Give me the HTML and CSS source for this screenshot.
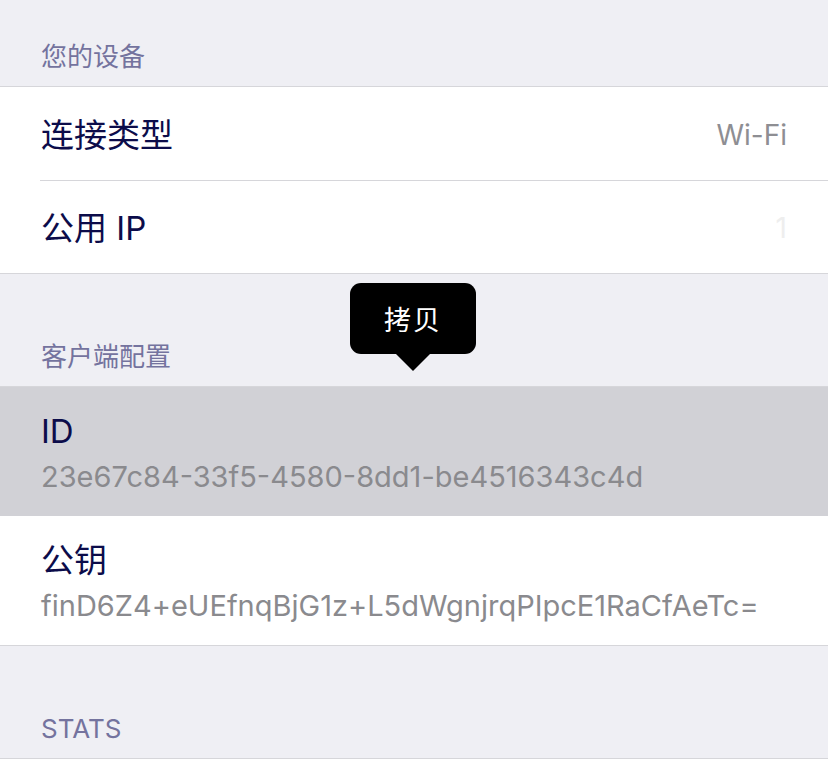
FILE: index.html
```html
<!DOCTYPE html>
<html lang="zh-CN">
<head>
<meta charset="utf-8">
<link rel="stylesheet" href="styles.css">
</head>
<body>
<div class="page">
  <div class="section-header first">您的设备</div>
  <div class="group">
    <div class="row">
      <span class="title">连接类型</span>
      <span class="value">Wi-Fi</span>
    </div>
    <div class="row">
      <span class="title">公用 IP</span>
      <span class="value faint">1</span>
    </div>
  </div>

  <div class="section-header">客户端配置</div>
  <div class="group">
    <div class="row stacked selected">
      <span class="title">ID</span>
      <span class="sub">23e67c84-33f5-4580-8dd1-be4516343c4d</span>
    </div>
    <div class="row stacked">
      <span class="title">公钥</span>
      <span class="sub">finD6Z4+eUEfnqBjG1z+L5dWgnjrqPIpcE1RaCfAeTc=</span>
    </div>
  </div>

  <div class="section-header">STATS</div>
  <div class="group end"></div>

  <div class="tooltip">拷贝<span class="arrow"></span></div>
</div>
</body>
</html>
```

FILE: styles.css
```css
html, body {
  margin: 0;
  padding: 0;
  background: #efeff4;
}
.page {
  position: relative;
  width: 828px;
  height: 759px;
  overflow: hidden;
  font-family: Inter, "Noto Sans CJK SC", sans-serif;
}
.section-header {
  height: 112px;
  box-sizing: border-box;
  display: flex;
  align-items: flex-end;
  padding: 0 0 11px 41px;
  font-size: 26px;
  color: #74739e;
  line-height: 36px;
}
.section-header.first {
  height: 86px;
  padding-bottom: 11px;
}
.group {
  background: #fff;
  border-top: 1px solid #d6d6da;
  border-bottom: 1px solid #d6d6da;
}
.group.end {
  height: 0;
  border-bottom: none;
}
.row {
  display: flex;
  align-items: center;
  justify-content: space-between;
  height: 93px;
  box-sizing: border-box;
  padding: 2px 41px 0 41px;
  position: relative;
}
.row + .row::before {
  content: "";
  position: absolute;
  left: 40px;
  right: 0;
  top: 0;
  border-top: 1px solid #d6d6da;
}
.title {
  font-size: 33px;
  color: #0c0c4a;
  line-height: 40px;
}
.value {
  font-size: 28px;
  color: #8e8e93;
}
.value.faint {
  color: #eeeeee;
}
.row.stacked {
  height: 129px;
  flex-direction: column;
  align-items: flex-start;
  justify-content: center;
  gap: 8px;
  padding-top: 3px;
}
.row.stacked + .row.stacked::before {
  display: none;
}
.row.selected {
  background: #d1d1d6;
}
.sub {
  font-size: 29px;
  color: #8a8a8e;
  line-height: 36px;
}
.tooltip {
  position: absolute;
  left: 350px;
  top: 283px;
  width: 126px;
  height: 71px;
  background: #000;
  border-radius: 11px;
  color: #fff;
  font-size: 27px;
  display: flex;
  align-items: center;
  justify-content: center;
  letter-spacing: 2px;
}
.tooltip .arrow {
  position: absolute;
  left: 50%;
  bottom: -17px;
  margin-left: -18px;
  border-left: 18px solid transparent;
  border-right: 18px solid transparent;
  border-top: 18px solid #000;
}
```
